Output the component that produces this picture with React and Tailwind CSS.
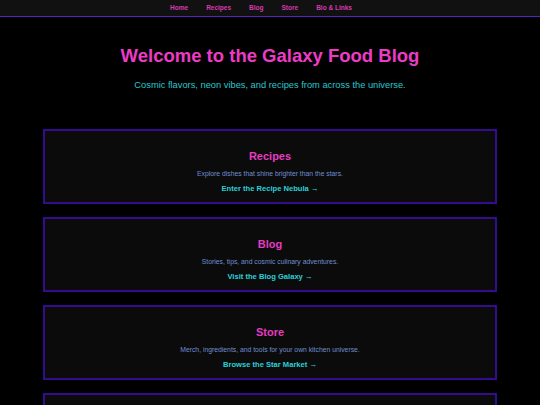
const links = ['Home', 'Recipes', 'Blog', 'Store', 'Bio & Links'];

const cards = [
  { title: 'Recipes', text: 'Explore dishes that shine brighter than the stars.', cta: 'Enter the Recipe Nebula →' },
  { title: 'Blog', text: 'Stories, tips, and cosmic culinary adventures.', cta: 'Visit the Blog Galaxy →' },
  { title: 'Store', text: 'Merch, ingredients, and tools for your own kitchen universe.', cta: 'Browse the Star Market →' },
  { title: 'Bio & Links', text: 'Meet the chef and find us across the cosmos.', cta: 'Explore the Links →' },
];

export default function App() {
  return (
    <div className="min-h-screen bg-black font-['Liberation_Sans',Arial,sans-serif]">
      {/* Nav */}
      <nav className="h-[17px] bg-[#111111] border-b border-[#5a22c0] flex items-center justify-center">
        {links.map((l) => (
          <a key={l} className="mr-[18px] text-[6.5px] font-bold text-[#d63aae] leading-none">
            {l}
          </a>
        ))}
      </nav>

      {/* Hero */}
      <header className="text-center pt-[28px]">
        <h1 className="text-[18.5px] leading-[22px] font-bold text-[#ec3cc6]">Welcome to the Galaxy Food Blog</h1>
        <p className="mt-[12px] text-[9.3px] leading-[12px] text-[#2bc6cf]">
          Cosmic flavors, neon vibes, and recipes from across the universe.
        </p>
      </header>

      {/* Cards */}
      <main className="mx-[43px] mt-[38px] flex flex-col gap-[13px]">
        {cards.map((c) => (
          <section
            key={c.title}
            className="border-2 border-[#330c8f] bg-[#0b0b0b] text-center pt-[19px] pb-[10px] h-[75px]"
          >
            <h2 className="text-[11px] leading-[13px] font-bold text-[#e53cc2]">{c.title}</h2>
            <p className="mt-[6px] text-[6.8px] leading-[9px] text-[#6f8fd0]">{c.text}</p>
            <a className="block mt-[6px] text-[7.6px] leading-[10px] font-bold text-[#2ad0d8]">{c.cta}</a>
          </section>
        ))}
      </main>
    </div>
  );
}
